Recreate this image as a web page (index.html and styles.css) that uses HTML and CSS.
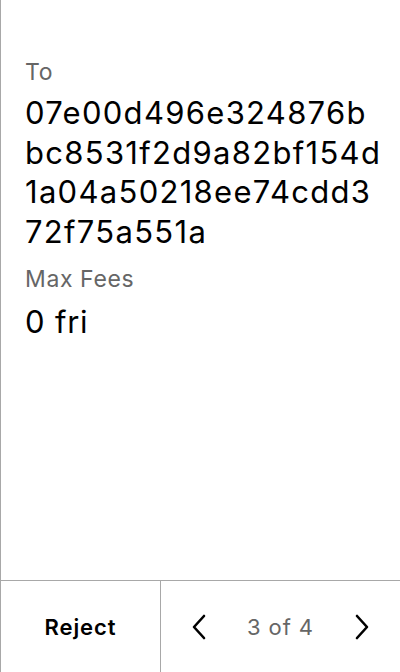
FILE: index.html
```html
<!DOCTYPE html>
<html>
<head>
<meta charset="utf-8">
<link rel="stylesheet" href="styles.css">
</head>
<body>
<div class="screen">
  <div class="content">
    <div class="label">To</div>
    <div class="value hex"><span class="line">07e00d496e324876b</span><span class="line">bc8531f2d9a82bf154d</span><span class="line">1a04a50218ee74cdd3</span><span class="line">72f75a551a</span></div>
    <div class="label">Max Fees</div>
    <div class="value fee">0 fri</div>
  </div>
  <div class="footer">
    <div class="reject">Reject</div>
    <div class="pager">
      <svg class="chev" width="16" height="26" viewBox="0 0 16 26"><path d="M13 2 L3 13 L13 24" fill="none" stroke="#000" stroke-width="2.6" stroke-linecap="round" stroke-linejoin="round"/></svg>
      <span class="count">3 of 4</span>
      <svg class="chev" width="16" height="26" viewBox="0 0 16 26"><path d="M3 2 L13 13 L3 24" fill="none" stroke="#000" stroke-width="2.6" stroke-linecap="round" stroke-linejoin="round"/></svg>
    </div>
  </div>
</div>
</body>
</html>
```
FILE: styles.css
```css
html, body { margin: 0; padding: 0; background: #fff; }
body { font-family: Inter, "Noto Sans", sans-serif; color: #000; }
.screen {
  width: 400px; height: 672px; box-sizing: border-box;
  border-left: 1px solid #a8a8a8;
  display: flex; flex-direction: column;
}
.content { flex: 1; padding: 58px 20px 0 24px; }
.label { font-size: 23px; line-height: 28px; color: #666; letter-spacing: 0.6px; }
.value { font-size: 31px; line-height: 39.5px; letter-spacing: 1.3px; }
.hex { margin-top: 7px; margin-bottom: 14px; }
.hex .line { display: block; white-space: nowrap; }
.fee { margin-top: 9px; letter-spacing: 0.8px; }
.footer {
  height: 92px; box-sizing: border-box; border-top: 1px solid #a8a8a8;
  display: flex;
}
.reject {
  width: 159px; border-right: 1px solid #a8a8a8;
  display: flex; align-items: center; justify-content: center;
  font-size: 22px; font-weight: 600; letter-spacing: 0.9px;
}
.pager { flex: 1; display: flex; align-items: center; justify-content: center; gap: 40px; }
.count { font-size: 22px; color: #666; letter-spacing: 0.9px; }
```
